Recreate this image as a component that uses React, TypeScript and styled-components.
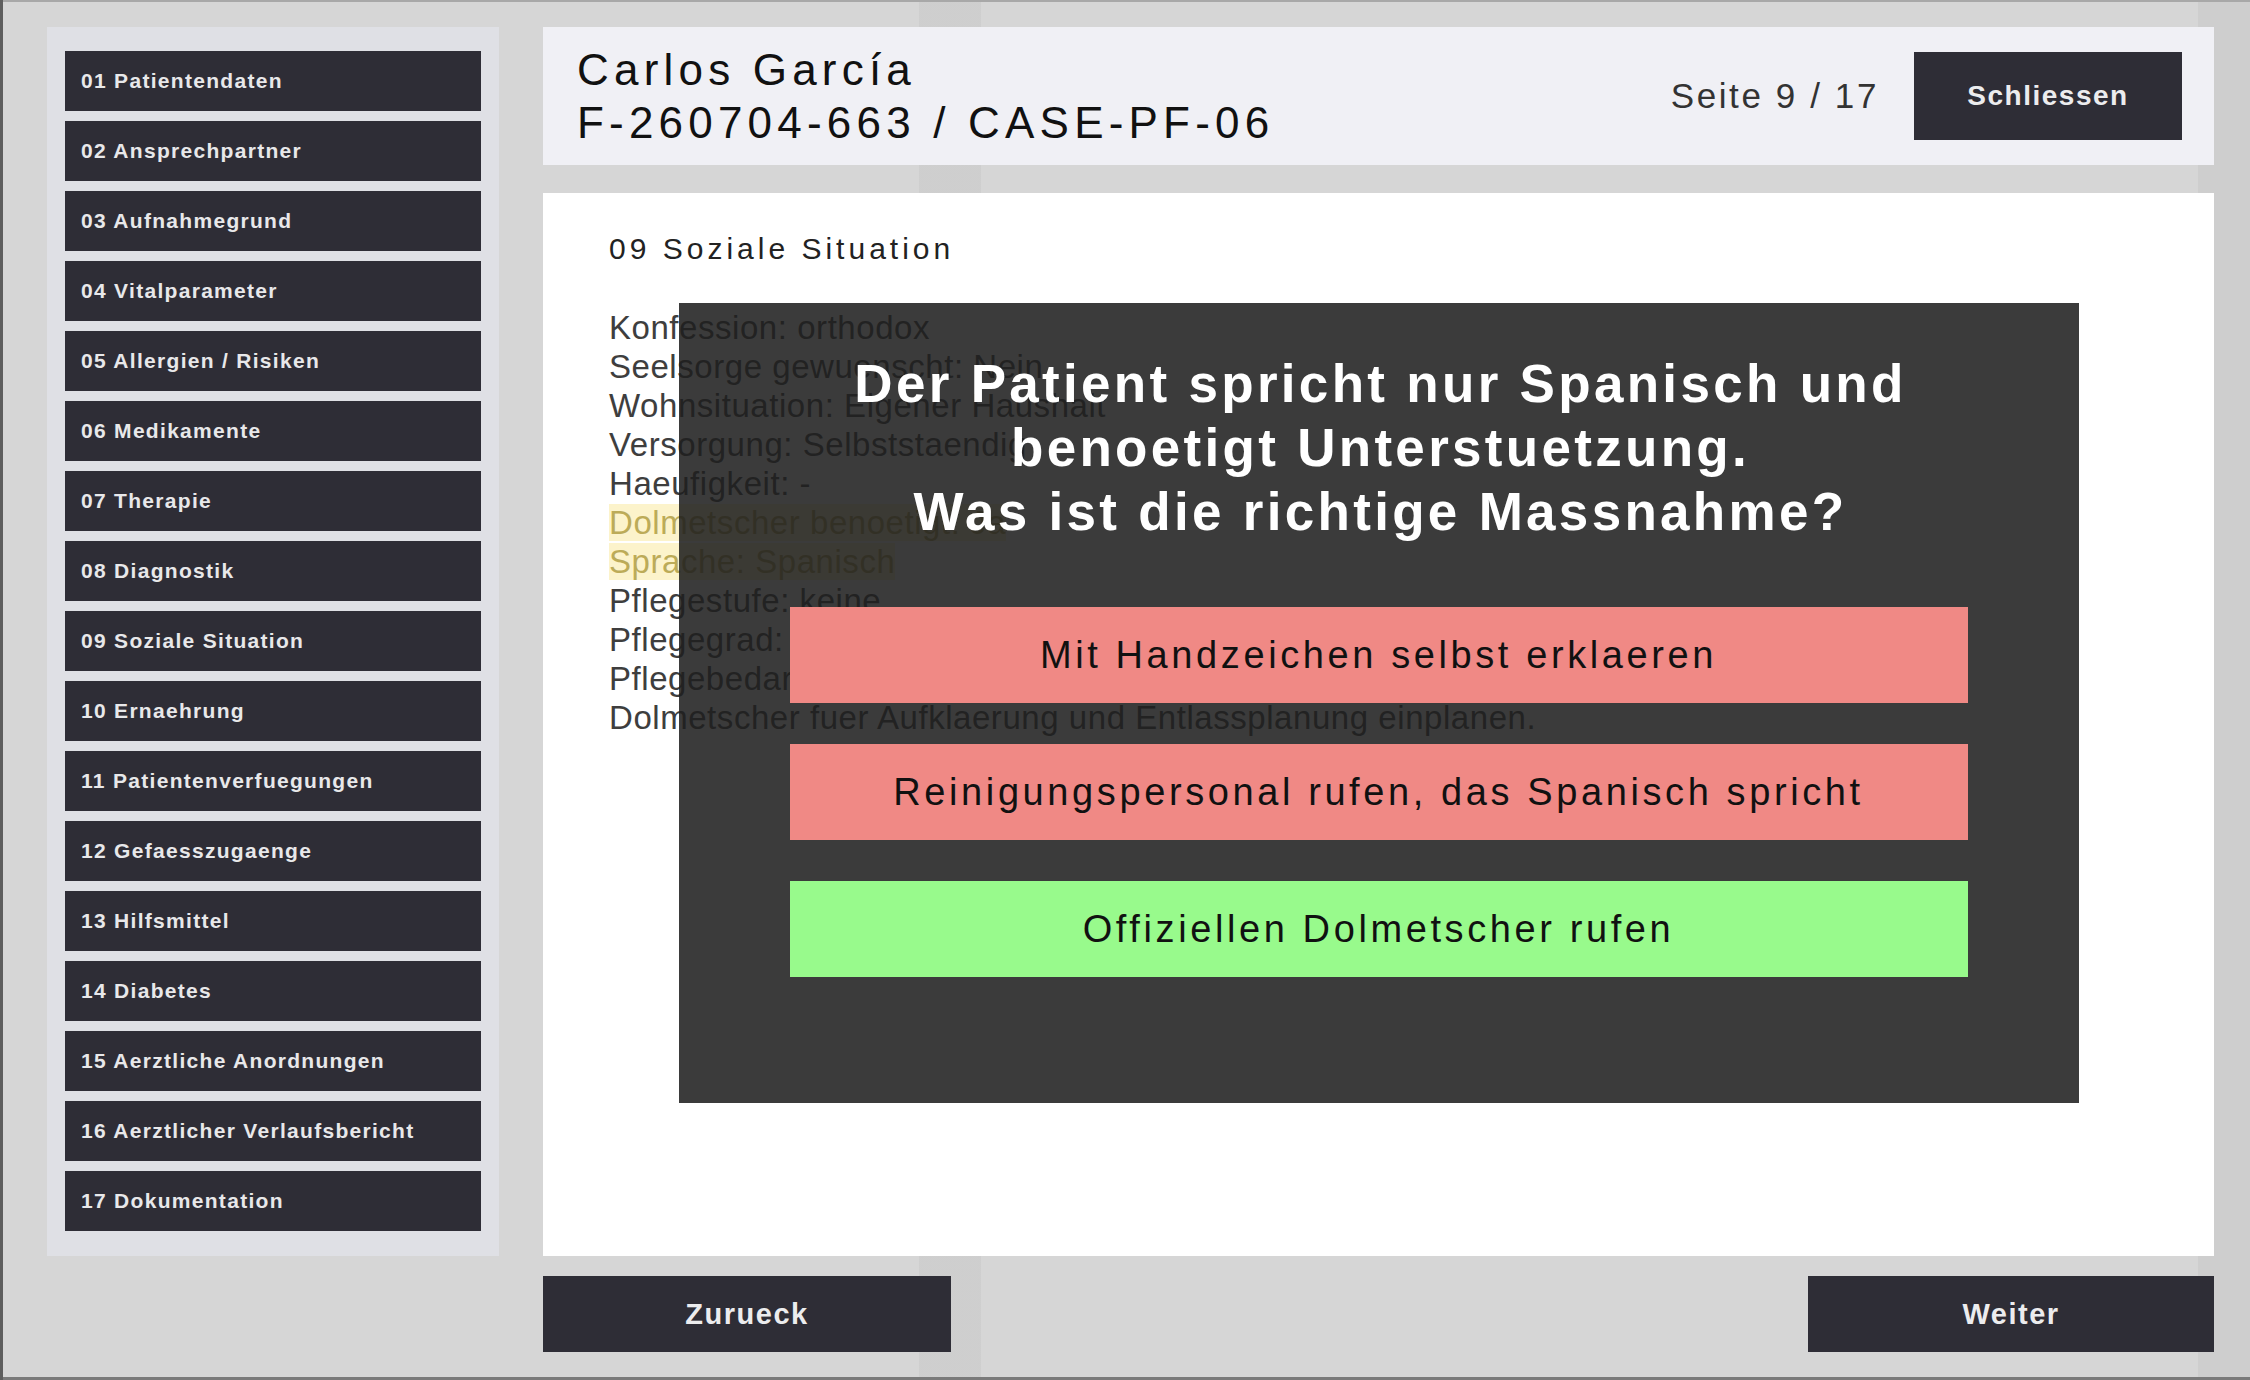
import React from 'react';
import styled, { createGlobalStyle } from 'styled-components';

const GlobalStyle = createGlobalStyle`
  html, body {
    margin: 0;
    padding: 0;
  }
  body {
    font-family: 'Liberation Sans', Arial, sans-serif;
    background: #d6d6d6;
  }
  * {
    box-sizing: border-box;
  }
`;

const Screen = styled.div`
  width: 2250px;
  height: 1380px;
  overflow: hidden;
  display: grid;
  grid-template-columns: 452px 1671px;
  column-gap: 44px;
  align-items: start;
  padding: 27px 0 0 47px;
  background:
    linear-gradient(90deg, transparent 919px, rgba(0, 0, 0, 0.035) 919px, rgba(0, 0, 0, 0.035) 981px, transparent 981px),
    linear-gradient(90deg, transparent 2198px, rgba(0, 0, 0, 0.04) 2198px),
    #d6d6d6;
  box-shadow:
    inset 3px 0 0 #5e5e5e,
    inset 0 2px 0 #a8a8a8,
    inset 0 -3px 0 #7a7a7a;
`;

const Sidebar = styled.nav`
  height: 1229px;
  background: #dfe0e5;
  padding: 24px 18px;
  display: flex;
  flex-direction: column;
  gap: 10px;
`;

const NavButton = styled.button`
  flex: none;
  height: 60px;
  border: none;
  background: #2e2d36;
  color: #e8e8ea;
  font-family: 'Liberation Sans', Arial, sans-serif;
  font-weight: bold;
  font-size: 21px;
  letter-spacing: 1.3px;
  text-align: left;
  padding: 0 16px;
  cursor: pointer;
`;

const Main = styled.main`
  display: flex;
  flex-direction: column;
`;

const Header = styled.header`
  height: 138px;
  background: #f0f0f5;
  display: flex;
  align-items: center;
  padding: 0 32px 0 34px;
`;

const Identity = styled.div`
  flex: 1;
  font-size: 44px;
  line-height: 53px;
  letter-spacing: 5.2px;
  color: #111;
`;

const PageInfo = styled.span`
  font-size: 35px;
  letter-spacing: 2.6px;
  color: #333;
  margin-right: 35px;
`;

const DarkButton = styled.button<{ $w: number; $h: number; $size: number }>`
  width: ${(p) => p.$w}px;
  height: ${(p) => p.$h}px;
  border: none;
  background: #2e2d36;
  color: #ececee;
  font-family: 'Liberation Sans', Arial, sans-serif;
  font-weight: bold;
  font-size: ${(p) => p.$size}px;
  letter-spacing: 1.5px;
  cursor: pointer;
`;

const Content = styled.section`
  position: relative;
  margin-top: 28px;
  height: 1063px;
  background: #fff;
  padding: 38px 0 0 66px;
`;

const SectionTitle = styled.h1`
  margin: 0;
  font-weight: normal;
  font-size: 30px;
  line-height: 36px;
  letter-spacing: 4px;
  color: #222;
`;

const Fields = styled.div`
  margin-top: 41px;
  font-size: 33px;
  line-height: 39px;
  letter-spacing: 0.55px;
  color: #3e3e3e;
`;

const Field = styled.div<{ $highlight?: boolean }>`
  width: fit-content;
  ${(p) =>
    p.$highlight &&
    `
    color: #bcab58;
    background: linear-gradient(#fcf3cb, #fcf3cb) 0 1px / 100% 37px no-repeat;
  `}
`;

const Dialog = styled.div`
  position: absolute;
  top: 110px;
  left: 50%;
  transform: translateX(-50%);
  width: 1400px;
  height: 800px;
  background: rgba(30, 30, 30, 0.87);
  padding-top: 49px;
  display: flex;
  flex-direction: column;
  align-items: center;
`;

const Question = styled.h2`
  margin: 0;
  padding-left: 4px;
  font-weight: bold;
  font-size: 53px;
  line-height: 64px;
  letter-spacing: 3.3px;
  color: #fff;
  text-align: center;
`;

const Answers = styled.div`
  margin-top: 63px;
  width: 1178px;
  display: flex;
  flex-direction: column;
  gap: 41px;
`;

const Answer = styled.button<{ $correct?: boolean }>`
  height: 96px;
  border: none;
  background: ${(p) => (p.$correct ? '#98fa8c' : '#f08985')};
  color: #111;
  font-family: 'Liberation Sans', Arial, sans-serif;
  font-size: 38px;
  letter-spacing: 3.6px;
  cursor: pointer;
`;

const Footer = styled.footer`
  margin-top: 20px;
  display: flex;
  justify-content: space-between;
`;

const sections = [
  '01 Patientendaten',
  '02 Ansprechpartner',
  '03 Aufnahmegrund',
  '04 Vitalparameter',
  '05 Allergien / Risiken',
  '06 Medikamente',
  '07 Therapie',
  '08 Diagnostik',
  '09 Soziale Situation',
  '10 Ernaehrung',
  '11 Patientenverfuegungen',
  '12 Gefaesszugaenge',
  '13 Hilfsmittel',
  '14 Diabetes',
  '15 Aerztliche Anordnungen',
  '16 Aerztlicher Verlaufsbericht',
  '17 Dokumentation',
];

const fields = [
  { text: 'Konfession: orthodox' },
  { text: 'Seelsorge gewuenscht: Nein' },
  { text: 'Wohnsituation: Eigener Haushalt' },
  { text: 'Versorgung: Selbststaendig' },
  { text: 'Haeufigkeit: -' },
  { text: 'Dolmetscher benoetigt: Ja', highlight: true },
  { text: 'Sprache: Spanisch', highlight: true },
  { text: 'Pflegestufe: keine' },
  { text: 'Pflegegrad: -' },
  { text: 'Pflegebedarf: gering' },
  { text: 'Dolmetscher fuer Aufklaerung und Entlassplanung einplanen.' },
];

const answers = [
  { text: 'Mit Handzeichen selbst erklaeren' },
  { text: 'Reinigungspersonal rufen, das Spanisch spricht' },
  { text: 'Offiziellen Dolmetscher rufen', correct: true },
];

export default function App() {
  return (
    <>
      <GlobalStyle />
      <Screen>
        <Sidebar>
          {sections.map((s) => (
            <NavButton key={s}>{s}</NavButton>
          ))}
        </Sidebar>
        <Main>
          <Header>
            <Identity>
              Carlos García
              <br />
              F-260704-663 / CASE-PF-06
            </Identity>
            <PageInfo>Seite 9 / 17</PageInfo>
            <DarkButton $w={268} $h={88} $size={28}>
              Schliessen
            </DarkButton>
          </Header>
          <Content>
            <SectionTitle>09 Soziale Situation</SectionTitle>
            <Fields>
              {fields.map((f) => (
                <Field key={f.text} $highlight={f.highlight}>
                  {f.text}
                </Field>
              ))}
            </Fields>
            <Dialog>
              <Question>
                Der Patient spricht nur Spanisch und
                <br />
                benoetigt Unterstuetzung.
                <br />
                Was ist die richtige Massnahme?
              </Question>
              <Answers>
                {answers.map((a) => (
                  <Answer key={a.text} $correct={a.correct}>
                    {a.text}
                  </Answer>
                ))}
              </Answers>
            </Dialog>
          </Content>
          <Footer>
            <DarkButton $w={408} $h={76} $size={29}>
              Zurueck
            </DarkButton>
            <DarkButton $w={406} $h={76} $size={29}>
              Weiter
            </DarkButton>
          </Footer>
        </Main>
      </Screen>
    </>
  );
}
